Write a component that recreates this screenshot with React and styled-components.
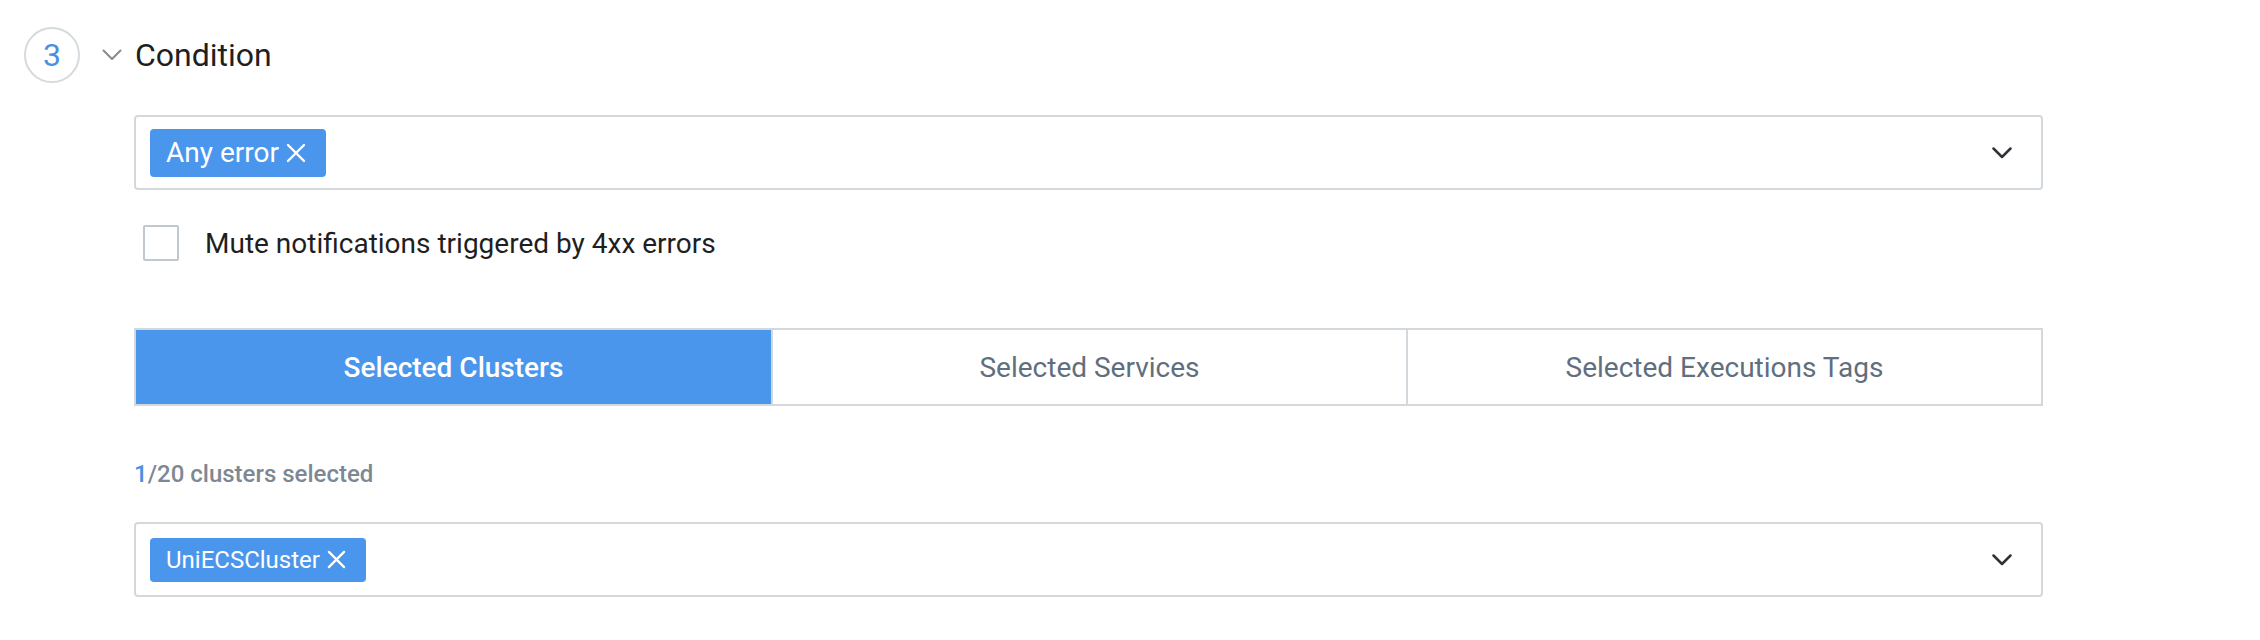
import React from "react";
import styled, { createGlobalStyle } from "styled-components";

const GlobalStyle = createGlobalStyle`
  body {
    margin: 0;
    background: #ffffff;
    font-family: Roboto, "Liberation Sans", Arial, sans-serif;
  }
`;

const Page = styled.div`
  padding: 27px 0 0 24px;
  width: 2236px;
  height: 613px;
  overflow: hidden;
`;

const Header = styled.div`
  display: flex;
  align-items: center;
  height: 56px;
`;

const StepCircle = styled.div`
  width: 56px;
  height: 56px;
  box-sizing: border-box;
  border: 2px solid #d5dade;
  border-radius: 50%;
  display: flex;
  align-items: center;
  justify-content: center;
  color: #4a90e2;
  font-size: 32px;
`;

const Toggle = styled.span`
  display: flex;
  margin-left: 22px;
  color: #8a8a8a;
`;

const Title = styled.h2`
  margin: 0 0 0 13px;
  font-size: 32px;
  font-weight: 400;
  color: #1f1f1f;
`;

const Body = styled.div`
  margin-left: 110px;
  width: 1909px;
  padding-top: 32px;
`;

const Select = styled.div`
  box-sizing: border-box;
  height: 75px;
  border: 2px solid #d3d8dc;
  border-radius: 4px;
  display: flex;
  align-items: center;
  justify-content: space-between;
  padding: 0 29px 0 14px;
  margin-top: ${(p) => p.$top || 0}px;
`;

const Tag = styled.span`
  display: inline-flex;
  align-items: center;
  gap: 7px;
  height: ${(p) => p.$h}px;
  padding: 0 20px 0 16px;
  box-sizing: border-box;
  background: #4a96ec;
  color: #ffffff;
  border-radius: 4px;
  font-size: ${(p) => p.$size}px;
`;

const CheckRow = styled.label`
  display: flex;
  align-items: center;
  margin-top: 35px;
  padding-left: 9px;
  font-size: 28px;
  color: #1f1f1f;
`;

const Box = styled.span`
  width: 36px;
  height: 36px;
  box-sizing: border-box;
  border: 2px solid #c0c8ce;
  border-radius: 2px;
  margin-right: 26px;
`;

const Tabs = styled.div`
  display: grid;
  grid-template-columns: repeat(3, 1fr);
  margin-top: 67px;
  border: 2px solid #d3d8dc;
  height: 78px;
  box-sizing: border-box;
`;

const Tab = styled.div`
  display: flex;
  align-items: center;
  justify-content: center;
  font-size: 28px;
  font-weight: ${(p) => (p.$active ? 500 : 400)};
  color: ${(p) => (p.$active ? "#ffffff" : "#5f6f7e")};
  background: ${(p) => (p.$active ? "#4a96ec" : "#ffffff")};
  & + & {
    border-left: 2px solid #d3d8dc;
  }
`;

const Count = styled.div`
  margin-top: 54px;
  font-size: 24px;
  line-height: 28px;
  font-weight: 500;
  color: #7d8894;
`;

const Blue = styled.span`
  color: #4a90e2;
`;

const Chevron = ({ size = 20, color = "#2d3338", w = 2.5 }) => (
  <svg width={size} height={size * 0.6} viewBox="0 0 20 12" fill="none">
    <path d="M1.5 1.5 L10 10 L18.5 1.5" stroke={color} strokeWidth={w} strokeLinecap="round" strokeLinejoin="round" />
  </svg>
);

const Close = ({ size }) => (
  <svg width={size} height={size} viewBox="0 0 20 20" fill="none">
    <path d="M2 2 L18 18 M18 2 L2 18" stroke="#ffffff" strokeWidth="2.4" strokeLinecap="round" />
  </svg>
);

export default function App() {
  return (
    <Page>
      <GlobalStyle />
      <Header>
        <StepCircle>3</StepCircle>
        <Toggle>
          <Chevron color="#8a8a8a" w={2} />
        </Toggle>
        <Title>Condition</Title>
      </Header>
      <Body>
        <Select>
          <Tag $h={48} $size={28}>
            Any error
            <Close size={20} />
          </Tag>
          <Chevron />
        </Select>
        <CheckRow>
          <Box />
          Mute notifications triggered by 4xx errors
        </CheckRow>
        <Tabs>
          <Tab $active>Selected Clusters</Tab>
          <Tab>Selected Services</Tab>
          <Tab>Selected Executions Tags</Tab>
        </Tabs>
        <Count>
          <Blue>1</Blue>/20 clusters selected
        </Count>
        <Select $top={34}>
          <Tag $h={44} $size={24}>
            UniECSCluster
            <Close size={19} />
          </Tag>
          <Chevron />
        </Select>
      </Body>
    </Page>
  );
}
